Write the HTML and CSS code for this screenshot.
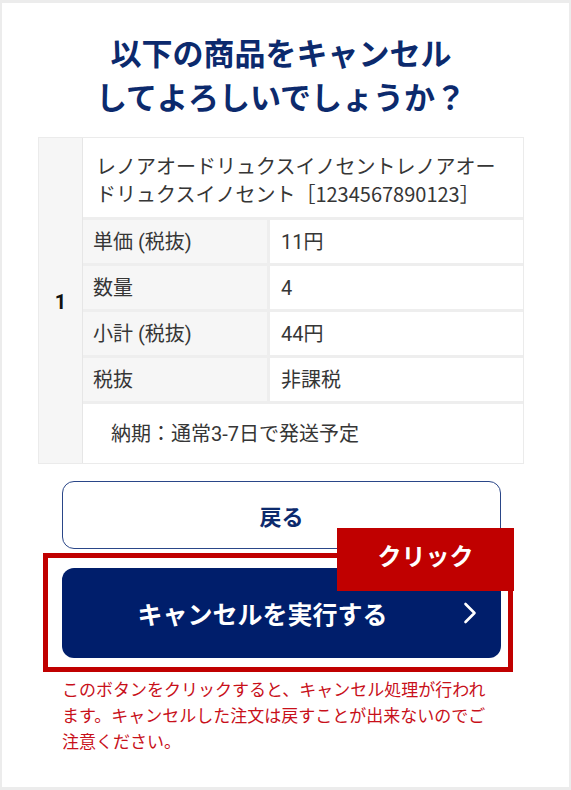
FILE: index.html
```html
<!DOCTYPE html>
<html lang="ja">
<head>
<meta charset="utf-8">
<title>キャンセル確認</title>
<link rel="stylesheet" href="styles.css">
</head>
<body>
<div class="frame">
  <h1 class="title">以下の商品をキャンセル<br>してよろしいでしょうか？</h1>

  <div class="item">
    <div class="num">1</div>
    <div class="details">
      <div class="name">レノアオードリュクスイノセントレノアオードリュクスイノセント［1234567890123］</div>
      <div class="label">単価 (税抜)</div>
      <div class="value">11円</div>
      <div class="label">数量</div>
      <div class="value">4</div>
      <div class="label">小計 (税抜)</div>
      <div class="value">44円</div>
      <div class="label">税抜</div>
      <div class="value">非課税</div>
      <div class="delivery">納期：通常3-7日で発送予定</div>
    </div>
  </div>

  <div class="actions">
    <a href="#" class="btn-back">戻る</a>
    <div class="cancel-wrap">
      <a href="#" class="btn-cancel">キャンセルを実行する
        <svg class="chevron" width="14" height="22" viewBox="0 0 14 22" aria-hidden="true"><path d="M2.5 2 L11.5 11 L2.5 20" fill="none" stroke="#ffffff" stroke-width="2.6" stroke-linecap="round" stroke-linejoin="round"/></svg>
      </a>
      <div class="highlight"></div>
      <div class="click-tag">クリック</div>
    </div>
    <p class="note">このボタンをクリックすると、キャンセル処理が行われます。キャンセルした注文は戻すことが出来ないのでご注意ください。</p>
  </div>
</div>
</body>
</html>
```

FILE: styles.css
```css
html, body {
  margin: 0;
  padding: 0;
  background: #ffffff;
}

body {
  font-family: "Noto Sans CJK JP", sans-serif;
  color: #333333;
}

.frame {
  width: 571px;
  height: 790px;
  box-sizing: border-box;
  border: 2px solid #ececec;
  border-top-width: 3px;
  border-bottom-width: 3px;
  padding: 27px 45px 0 36px;
  background: #ffffff;
}

.title {
  margin: 0 0 19px;
  font-size: 31px;
  line-height: 44px;
  font-weight: 700;
  text-align: center;
  color: #0c2a6d;
}

.item {
  display: flex;
  box-sizing: border-box;
  width: 486px;
  border: 1px solid #ebebeb;
}

.num {
  width: 44px;
  flex: none;
  background: #f6f6f6;
  border-right: 1px solid #e6e6e6;
  display: flex;
  align-items: center;
  justify-content: center;
  font-family: Roboto, "Noto Sans CJK JP", sans-serif;
  font-weight: 700;
  font-size: 20px;
  color: #111111;
  padding-top: 2px;
  box-sizing: border-box;
}

.details {
  flex: 1;
  display: grid;
  grid-template-columns: 184px 1fr;
  grid-template-rows: 79px 43px 43px 43px 43px 59px;
  gap: 3px;
  background: #eeeeee;
  font-family: Roboto, "Noto Sans CJK JP", sans-serif;
  font-size: 20px;
  color: #363636;
}

.name {
  grid-column: 1 / -1;
  background: #ffffff;
  box-sizing: border-box;
  padding: 14px 16px 9px 13px;
  line-height: 28px;
  font-family: "Noto Sans CJK JP", sans-serif;
}

.label,
.value {
  display: flex;
  align-items: center;
  line-height: 1;
}

.label {
  background: #f6f6f6;
  padding-left: 10px;
}

.value {
  background: #ffffff;
  padding-left: 11px;
}

.delivery {
  grid-column: 1 / -1;
  background: #ffffff;
  display: flex;
  align-items: center;
  padding-left: 28px;
  line-height: 1;
}

.actions {
  margin: 17px 23px 0 24px;
}

.btn-back {
  display: flex;
  align-items: center;
  justify-content: center;
  box-sizing: border-box;
  height: 68px;
  border: 1.5px solid #2a4688;
  border-radius: 12px;
  background: #ffffff;
  color: #0c2a6d;
  font-size: 22px;
  font-weight: 700;
  text-decoration: none;
}

.cancel-wrap {
  position: relative;
  margin-top: 19px;
  height: 90px;
}

.btn-cancel {
  position: relative;
  display: flex;
  align-items: center;
  justify-content: center;
  box-sizing: border-box;
  height: 90px;
  padding-right: 38px;
  border-radius: 12px;
  background: #001e6b;
  color: #ffffff;
  font-size: 25px;
  font-weight: 700;
  text-decoration: none;
}

.chevron {
  position: absolute;
  right: 24px;
  top: 34px;
}

.highlight {
  position: absolute;
  left: -19px;
  top: -15px;
  right: -12px;
  bottom: -14px;
  border: 5px solid #c00000;
  box-sizing: border-box;
  pointer-events: none;
}

.click-tag {
  position: absolute;
  left: 275px;
  top: -40px;
  width: 177px;
  height: 63px;
  box-sizing: border-box;
  padding-bottom: 11px;
  display: flex;
  align-items: center;
  justify-content: center;
  background: #c00000;
  color: #ffffff;
  font-size: 24px;
  font-weight: 700;
}

.note {
  margin: 18px 0 0;
  font-size: 17px;
  line-height: 26px;
  color: #c8101a;
}
```
